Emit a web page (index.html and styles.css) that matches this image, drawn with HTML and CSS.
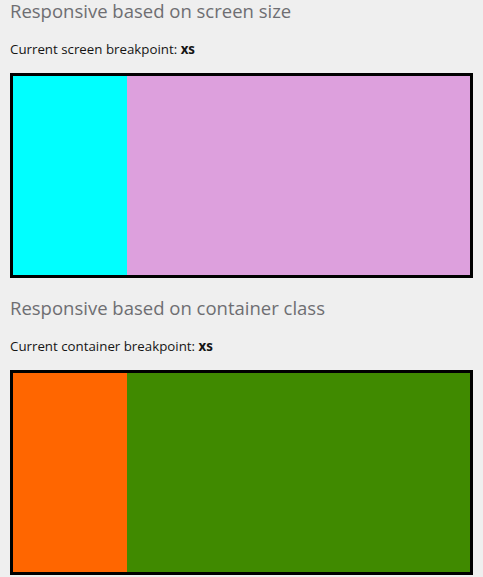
FILE: index.html
```html
<!DOCTYPE html>
<html>
<head>
<meta charset="utf-8">
<link rel="stylesheet" href="styles.css">
</head>
<body>
<section class="demo">
  <h2 class="title">Responsive based on screen size</h2>
  <p class="status">Current screen breakpoint: <strong>xs</strong></p>
  <div class="box">
    <div class="col col-a cyan"></div>
    <div class="col col-b plum"></div>
  </div>
</section>
<section class="demo">
  <h2 class="title">Responsive based on container class</h2>
  <p class="status">Current container breakpoint: <strong>xs</strong></p>
  <div class="box">
    <div class="col col-a orange"></div>
    <div class="col col-b green"></div>
  </div>
</section>
</body>
</html>
```
FILE: styles.css
```css
html, body {
  margin: 0;
  padding: 0;
  background: #efefef;
}
body {
  padding: 0 10px;
  font-family: "Open Sans", Lato, sans-serif;
  color: #151515;
}
.demo {
  display: flex;
  flex-direction: column;
}
.demo + .demo {
  margin-top: 19px;
}
.title {
  margin: 0;
  font-size: 18.5px;
  line-height: 22px;
  font-weight: 400;
  color: #6e6e72;
}
.status {
  margin: 17px 0 0;
  font-size: 13.3px;
  line-height: 20px;
}
.status strong {
  font-weight: 700;
}
.box {
  margin-top: 14px;
  border: 3px solid #000;
  height: 199px;
  display: flex;
}
.col-a { flex: 0 0 25%; }
.col-b { flex: 1 1 auto; }
.cyan { background: #00ffff; }
.plum { background: #dda0dd; }
.orange { background: #ff6600; }
.green { background: #408a00; }
```
